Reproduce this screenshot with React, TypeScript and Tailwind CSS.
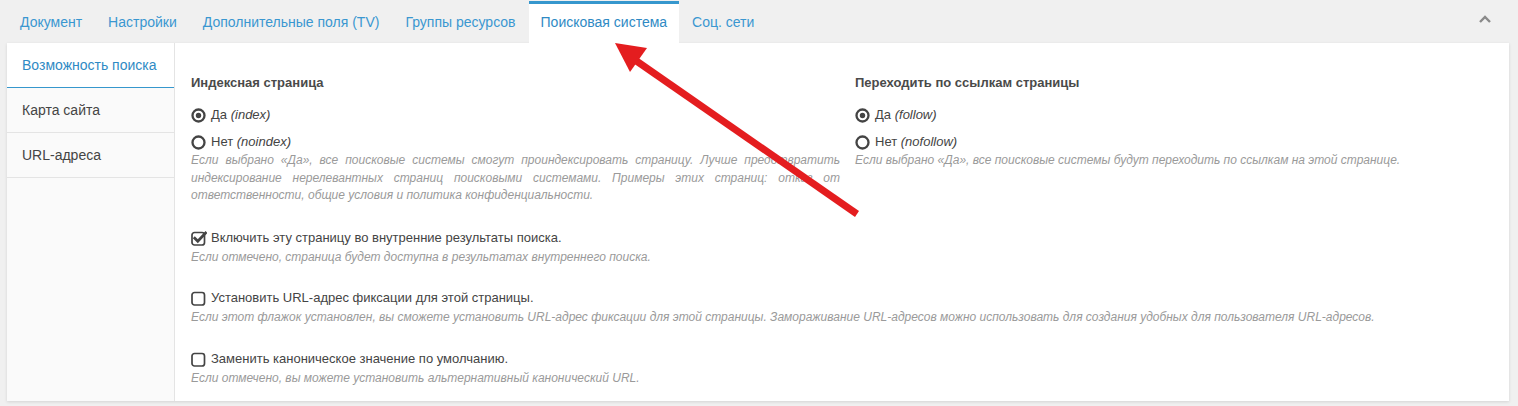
import React from "react";

const tabs = [
  "Документ",
  "Настройки",
  "Дополнительные поля (TV)",
  "Группы ресурсов",
  "Поисковая система",
  "Соц. сети",
];

const sideItems = ["Возможность поиска", "Карта сайта", "URL-адреса"];

function Radio({ checked }: { checked?: boolean }) {
  return (
    <svg width="15" height="15" viewBox="0 0 15 15" className="shrink-0">
      <circle cx="7.5" cy="7.5" r="6" fill="none" stroke="#444" strokeWidth="2.3" />
      {checked && <circle cx="7.5" cy="7.5" r="2.7" fill="#444" />}
    </svg>
  );
}

function Checkbox({ checked }: { checked?: boolean }) {
  return (
    <svg width="16" height="16" viewBox="0 0 16 16" className="shrink-0">
      <rect x="1" y="2.5" width="12.5" height="12.5" rx="2.5" fill="none" stroke="#444" strokeWidth="1.7" />
      {checked && (
        <path d="M3.8 8.2l3 3L14.6 3" fill="none" stroke="#444" strokeWidth="2.8" strokeLinecap="square" />
      )}
    </svg>
  );
}

function Help({ children, justify }: { children: React.ReactNode; justify?: boolean }) {
  return (
    <p className={`text-[12px] italic leading-[17.5px] text-[#9a9a9a] ${justify ? "text-justify" : ""}`}>
      {children}
    </p>
  );
}

function RadioRow({ checked, label, hint }: { checked?: boolean; label: string; hint: string }) {
  return (
    <div className="flex h-[16px] items-center gap-[5px] text-[13px] text-[#444]">
      <Radio checked={checked} />
      <span>
        {label} <i>({hint})</i>
      </span>
    </div>
  );
}

function CheckRow({ checked, label, help }: { checked?: boolean; label: string; help: string }) {
  return (
    <div className="flex flex-col">
      <div className="flex h-[18px] items-center gap-[4px] text-[13px] text-[#444]">
        <Checkbox checked={checked} />
        <span>{label}</span>
      </div>
      <div className="mt-[2px]">
        <Help>{help}</Help>
      </div>
    </div>
  );
}

export default function App() {
  return (
    <div
      className="relative h-[406px] w-[1518px] overflow-hidden bg-[#f0f0f0]"
      style={{ fontFamily: '"Liberation Sans", Arial, sans-serif' }}
    >
      {/* tab bar */}
      <div className="flex h-[43px] items-end pl-[7px] pr-[9px]">
        {tabs.map((t) => {
          const active = t === "Поисковая система";
          return (
            <div
              key={t}
              className={
                active
                  ? "flex h-[42px] items-center border-t-[3px] border-[#3697cd] bg-white px-3 pb-[3px] text-[14px] text-[#2f8ac4]"
                  : "flex h-[42px] items-center px-[13px] text-[14px] text-[#3a97d0]"
              }
            >
              {t}
            </div>
          );
        })}
        <div className="ml-auto flex h-[42px] items-center pr-[17px] pb-[6px]">
          <svg width="14" height="9" viewBox="0 0 14 9">
            <path d="M2 7l5-5 5 5" fill="none" stroke="#8a8a8a" strokeWidth="2.4" />
          </svg>
        </div>
      </div>

      {/* panel */}
      <div className="mx-[7px] flex h-[358px] w-[1502px] bg-white shadow-[0_1px_3px_rgba(0,0,0,0.12)]">
        <div className="w-[168px] shrink-0 border-r border-[#e4e4e4] bg-[#fafafa]">
          {sideItems.map((s, i) => (
            <div
              key={s}
              className={
                i === 0
                  ? "flex h-[45px] items-center border-b border-[#3697cd] bg-white pl-[15px] text-[14px] text-[#2f8ac4]"
                  : "flex h-[45px] items-center border-b border-[#e4e4e4] pl-[15px] text-[14px] text-[#444]"
              }
            >
              {s}
            </div>
          ))}
        </div>

        <div className="flex-1 pl-[16px] pr-[16px] pt-[32px]">
          <div className="grid grid-cols-[649px_1fr] gap-x-[15px]">
            <div>
              <h3 className="text-[13px] font-bold leading-[16px] text-[#4a4a4a]">Индексная страница</h3>
              <div className="mt-[16px] flex flex-col gap-[11px]">
                <RadioRow checked label="Да" hint="index" />
                <RadioRow label="Нет" hint="noindex" />
              </div>
              <div className="mt-[2px]">
                <Help justify>
                  Если выбрано «Да», все поисковые системы смогут проиндексировать страницу. Лучше предотвратить
                  индексирование нерелевантных страниц поисковыми системами. Примеры этих страниц: отказ от
                  ответственности, общие условия и политика конфиденциальности.
                </Help>
              </div>
            </div>
            <div>
              <h3 className="text-[13px] font-bold leading-[16px] text-[#4a4a4a]">Переходить по ссылкам страницы</h3>
              <div className="mt-[16px] flex flex-col gap-[11px]">
                <RadioRow checked label="Да" hint="follow" />
                <RadioRow label="Нет" hint="nofollow" />
              </div>
              <div className="mt-[2px]">
                <Help>Если выбрано «Да», все поисковые системы будут переходить по ссылкам на этой странице.</Help>
              </div>
            </div>
          </div>

          <div className="mt-[24px] flex flex-col gap-[23px]">
            <CheckRow
              checked
              label="Включить эту страницу во внутренние результаты поиска."
              help="Если отмечено, страница будет доступна в результатах внутреннего поиска."
            />
            <CheckRow
              label="Установить URL-адрес фиксации для этой страницы."
              help="Если этот флажок установлен, вы сможете установить URL-адрес фиксации для этой страницы. Замораживание URL-адресов можно использовать для создания удобных для пользователя URL-адресов."
            />
            <CheckRow
              label="Заменить каноническое значение по умолчанию."
              help="Если отмечено, вы можете установить альтернативный канонический URL."
            />
          </div>
        </div>
      </div>

      {/* annotation arrow */}
      <svg className="pointer-events-none absolute left-0 top-0" width="1518" height="406" viewBox="0 0 1518 406">
        <line x1="857" y1="214" x2="635" y2="60" stroke="#e41d1f" strokeWidth="7" />
        <polygon points="615,43 647,48 630,72" fill="#e41d1f" />
      </svg>
    </div>
  );
}
